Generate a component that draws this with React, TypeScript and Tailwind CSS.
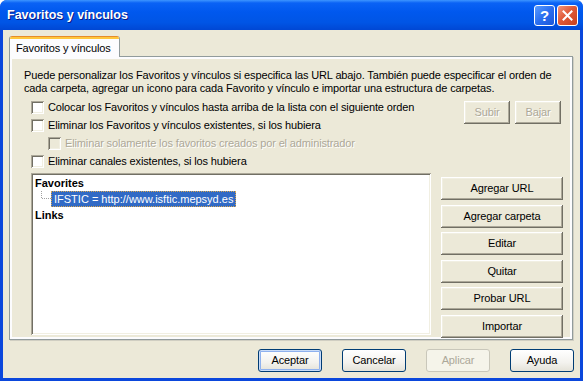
import React from 'react';

const raised =
  'shadow-[inset_-1px_-1px_#716f64,inset_1px_1px_#ffffff,inset_-2px_-2px_#aca899,inset_2px_2px_#f1efe2]';
const sunken =
  'shadow-[inset_1px_1px_#aca899,inset_-1px_-1px_#ffffff,inset_2px_2px_#716f64,inset_-2px_-2px_#f1efe2]';
const dimText = 'text-[#aca899] [text-shadow:1px_1px_#ffffff]';

const Check = ({ disabled = false }: { disabled?: boolean }) => (
  <span className={`w-[13px] h-[13px] shrink-0 ${sunken} ${disabled ? 'bg-[#ece9d8]' : 'bg-white'}`} />
);

const CheckRow = ({ label, disabled = false, indent = false }: { label: string; disabled?: boolean; indent?: boolean }) => (
  <div className={`h-[18px] flex items-center gap-[4px] ${indent ? 'pl-[17px]' : ''}`}>
    <Check disabled={disabled} />
    <span className={disabled ? dimText : 'text-black'}>{label}</span>
  </div>
);

const ClassicButton = ({ label, w, disabled = false }: { label: string; w: string; disabled?: boolean }) => (
  <div className={`${w} h-[23px] bg-[#ece9d8] ${raised} flex items-center justify-center`}>
    <span className={disabled ? dimText : 'text-black'}>{label}</span>
  </div>
);

const XPButton = ({ label, primary = false, disabled = false }: { label: string; primary?: boolean; disabled?: boolean }) => (
  <div
    className={`w-[64px] h-[23px] rounded-[3px] border flex items-center justify-center ${
      disabled
        ? 'border-[#c9c7ba] bg-[#f5f4ea] text-[#aca899]'
        : 'border-[#003c74] bg-[linear-gradient(to_bottom,#ffffff_0%,#f3f2ee_60%,#e4e2d8_100%)] text-black'
    } ${primary ? 'shadow-[inset_0_0_0_1px_#c9dcf8,inset_0_0_0_2px_#8fb1ee]' : ''}`}
  >
    {label}
  </div>
);

const sideButtons = ['Agregar URL', 'Agregar carpeta', 'Editar', 'Quitar', 'Probar URL', 'Importar'];

export default function App() {
  return (
    <div className="w-[583px] h-[381px] flex flex-col bg-[#0b47dc] rounded-t-[7px] overflow-hidden font-['Liberation_Sans',Arial,sans-serif] text-[11px] leading-[13px] tracking-[-0.13px] text-black">
      {/* Title bar */}
      <div className="h-[30px] shrink-0 flex items-center justify-between pl-[7px] pr-[5px] bg-[linear-gradient(to_bottom,#3d95ff_0%,#0a62f5_10%,#0058ee_40%,#0055e5_75%,#0047d4_100%)]">
        <span className="text-white font-bold text-[12.5px] tracking-normal [text-shadow:1px_1px_#0a1883]">Favoritos y vínculos</span>
        <div className="flex gap-[2px]">
          <div className="w-[21px] h-[21px] rounded-[3px] border border-white bg-[linear-gradient(135deg,#5a9cff_0%,#2a6ef0_50%,#1a56d8_100%)] flex items-center justify-center">
            <span className="text-white font-bold text-[15px] leading-none">?</span>
          </div>
          <div className="w-[21px] h-[21px] rounded-[3px] border border-white bg-[linear-gradient(135deg,#f2967c_0%,#e05a38_45%,#c8401c_100%)] flex items-center justify-center">
            <svg width="11" height="11" viewBox="0 0 11 11">
              <path d="M1.5 1.5 L9.5 9.5 M9.5 1.5 L1.5 9.5" stroke="#ffffff" strokeWidth="2" strokeLinecap="square" />
            </svg>
          </div>
        </div>
      </div>

      {/* Body */}
      <div className="flex-1 mx-[3px] mb-[3px] bg-[#ece9d8] flex flex-col pt-[6px]">
        {/* Tab header */}
        <div className="flex pl-[6px]">
          <div className="relative z-10 -mb-px w-[111px] h-[21px] flex flex-col border-x border-[#919b9c] bg-[#fcfcfe] rounded-t-[3px] overflow-hidden">
            <div className="h-[1px] bg-[#e68b2c]" />
            <div className="h-[2px] bg-[#ffc73c]" />
            <div className="flex-1 flex items-center pl-[6px]">Favoritos y vínculos</div>
          </div>
        </div>

        {/* Tab panel */}
        <div className="ml-[6px] w-[564px] h-[284px] border border-[#919b9c] bg-[#fcfcfe] p-[2px] shadow-[1px_1px_#d0cec2]">
          <div className="h-full bg-[#ece9d8] flex flex-col">
            <p className="pl-[12px] pt-[10px]">
              Puede personalizar los Favoritos y vínculos si especifica las URL abajo. También puede especificar el orden de
              <br />
              cada carpeta, agregar un icono para cada Favorito y vínculo e importar una estructura de carpetas.
            </p>

            <div className="mt-[3px] flex">
              <div className="flex-1 flex flex-col pl-[19px]">
                <CheckRow label="Colocar los Favoritos y vínculos hasta arriba de la lista con el siguiente orden" />
                <CheckRow label="Eliminar los Favoritos y vínculos existentes, si los hubiera" />
                <CheckRow label="Eliminar solamente los favoritos creados por el administrador" disabled indent />
                <CheckRow label="Eliminar canales existentes, si los hubiera" />
              </div>
              <div className="flex gap-[5px] pt-[3px] pr-[9px]">
                <ClassicButton label="Subir" w="w-[46px]" disabled />
                <ClassicButton label="Bajar" w="w-[46px]" disabled />
              </div>
            </div>

            <div className="mt-[3px] flex pl-[19px]">
              {/* Tree view */}
              <div className={`w-[400px] h-[162px] bg-white ${sunken} p-[2px] flex flex-col tracking-normal`}>
                <div className="h-[16px] flex items-center pl-[2px] font-bold">Favorites</div>
                <div className="h-[16px] flex items-center">
                  <svg width="18" height="16" className="shrink-0">
                    <path d="M8.5 0 V7.5 H18" stroke="#a0a0a0" strokeDasharray="1 1" fill="none" />
                  </svg>
                  <span className="h-[16px] px-[2px] flex items-center bg-[#316ac5] text-white border border-dotted border-[#d9a64f]">
                    IFSTIC = http://www.isftic.mepsyd.es
                  </span>
                </div>
                <div className="h-[16px] flex items-center pl-[2px] font-bold">Links</div>
              </div>

              {/* Side buttons */}
              <div className="ml-[10px] mt-[4px] flex flex-col gap-[4.6px]">
                {sideButtons.map((b) => (
                  <ClassicButton key={b} label={b} w="w-[122px]" />
                ))}
              </div>
            </div>
          </div>
        </div>

        {/* Dialog buttons */}
        <div className="mt-[9px] flex justify-end gap-[20px] pr-[6px]">
          <XPButton label="Aceptar" primary />
          <XPButton label="Cancelar" />
          <XPButton label="Aplicar" disabled />
          <XPButton label="Ayuda" />
        </div>
      </div>
    </div>
  );
}
